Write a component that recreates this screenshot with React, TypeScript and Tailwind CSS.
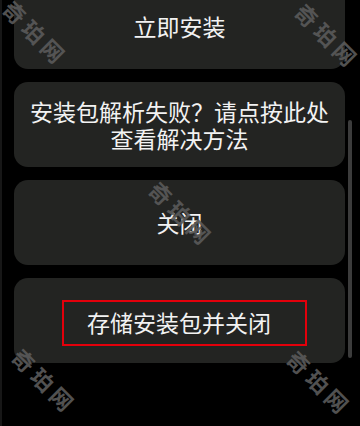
const cjk = { fontFamily: '"Noto Sans CJK SC", "Noto Sans", sans-serif' };

const marks = [
  { x: 34, y: 33 },
  { x: 326, y: 36 },
  { x: 180, y: 214 },
  { x: 43, y: 381 },
  { x: 318, y: 383 },
];

function Card({ children, className = "" }: { children: React.ReactNode; className?: string }) {
  return (
    <div
      className={`flex h-[85px] w-[331px] shrink-0 items-center justify-center rounded-[14px] bg-[#232422] px-4 text-center text-[23px] leading-[27px] text-[#f2f2f2] ${className}`}
    >
      {children}
    </div>
  );
}

export default function App() {
  return (
    <div
      className="relative h-[426px] w-[360px] overflow-hidden border-l-2 border-[#171717] bg-black"
      style={cjk}
    >
      <div className="-mt-4 flex flex-col gap-[13px] pl-3">
        <Card>立即安装</Card>
        <Card>
          安装包解析失败？请点按此处
          <br />
          查看解决方法
        </Card>
        <Card>关闭</Card>
        <Card className="pt-[4px]">
          <span className="ml-[10px] flex h-[46px] w-[245px] items-center border-2 border-[#e3000b] pl-[23px]">
            存储安装包并关闭
          </span>
        </Card>
      </div>

      {/* scrollbar */}
      <div className="absolute left-[346px] top-[120px] h-[238px] w-[4px] rounded-full bg-[#3c3c3c]" />

      {/* watermarks */}
      {marks.map((m, i) => (
        <div
          key={i}
          className="pointer-events-none absolute whitespace-nowrap text-[22px] font-bold tracking-[5px] text-[#5a5a5a] opacity-90"
          style={{ left: m.x, top: m.y, transform: "translate(-50%, -50%) rotate(45deg)" }}
        >
          奇珀网
        </div>
      ))}
    </div>
  );
}
